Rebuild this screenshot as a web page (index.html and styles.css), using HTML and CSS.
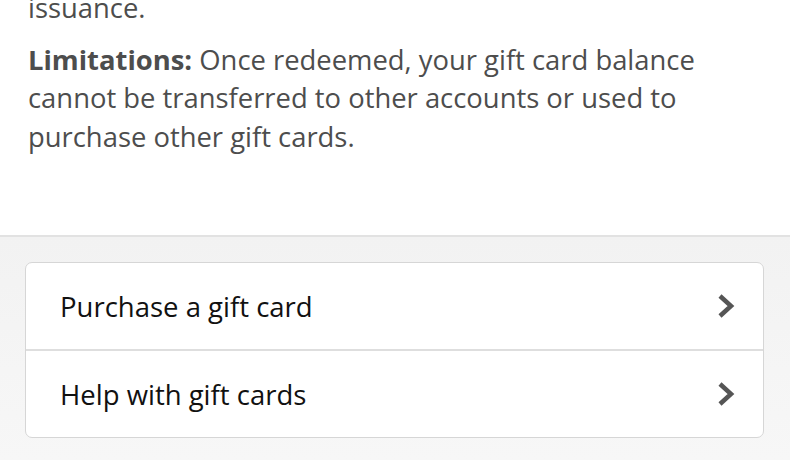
FILE: index.html
```html
<!DOCTYPE html>
<html lang="en">
<head>
    <meta charset="UTF-8">
    <meta name="viewport" content="width=device-width, initial-scale=1.0">
    <title>Gift Cards</title>
    <link rel="stylesheet" href="styles.css">
</head>
<body>
    <div class="terms">
        <p class="cut">issuance.</p>
        <p><strong>Limitations:</strong> Once redeemed, your gift card balance cannot be transferred to other accounts or used to purchase other gift cards.</p>
    </div>

    <div class="links">
        <div class="card">
            <a class="row" href="#">
                <span>Purchase a gift card</span>
                <svg class="chevron" width="18" height="26" viewBox="0 0 18 26"><path d="M3 3 L14 13 L3 23" /></svg>
            </a>
            <a class="row" href="#">
                <span>Help with gift cards</span>
                <svg class="chevron" width="18" height="26" viewBox="0 0 18 26"><path d="M3 3 L14 13 L3 23" /></svg>
            </a>
        </div>
    </div>
</body>
</html>
```

FILE: styles.css
```css
body {
    margin: 0;
    font-family: "Open Sans", Arial, sans-serif;
    background-color: white;
}
.terms {
    padding: 0 28px 79px 28px;
    color: #4d4d4d;
    font-size: 27.4px;
    line-height: 38.5px;
}
.terms p {
    margin: 0;
}
.terms .cut {
    margin-top: -11px;
    margin-bottom: 13px;
}
.terms strong {
    font-weight: bold;
}
.links {
    background: linear-gradient(to bottom, #f2f2f2, #f7f7f7);
    border-top: 2px solid #e2e2e2;
    padding: 25px 26px 22px 25px;
}
.card {
    background-color: white;
    border: 1px solid #d6d6d6;
    border-radius: 7px;
}
.row {
    display: flex;
    align-items: center;
    justify-content: space-between;
    height: 86px;
    padding: 0 28px 0 34px;
    color: #111;
    font-size: 27.5px;
    text-decoration: none;
}
.row + .row {
    border-top: 2px solid #dedede;
}
.chevron path {
    fill: none;
    stroke: #555;
    stroke-width: 4.5;
}
```
